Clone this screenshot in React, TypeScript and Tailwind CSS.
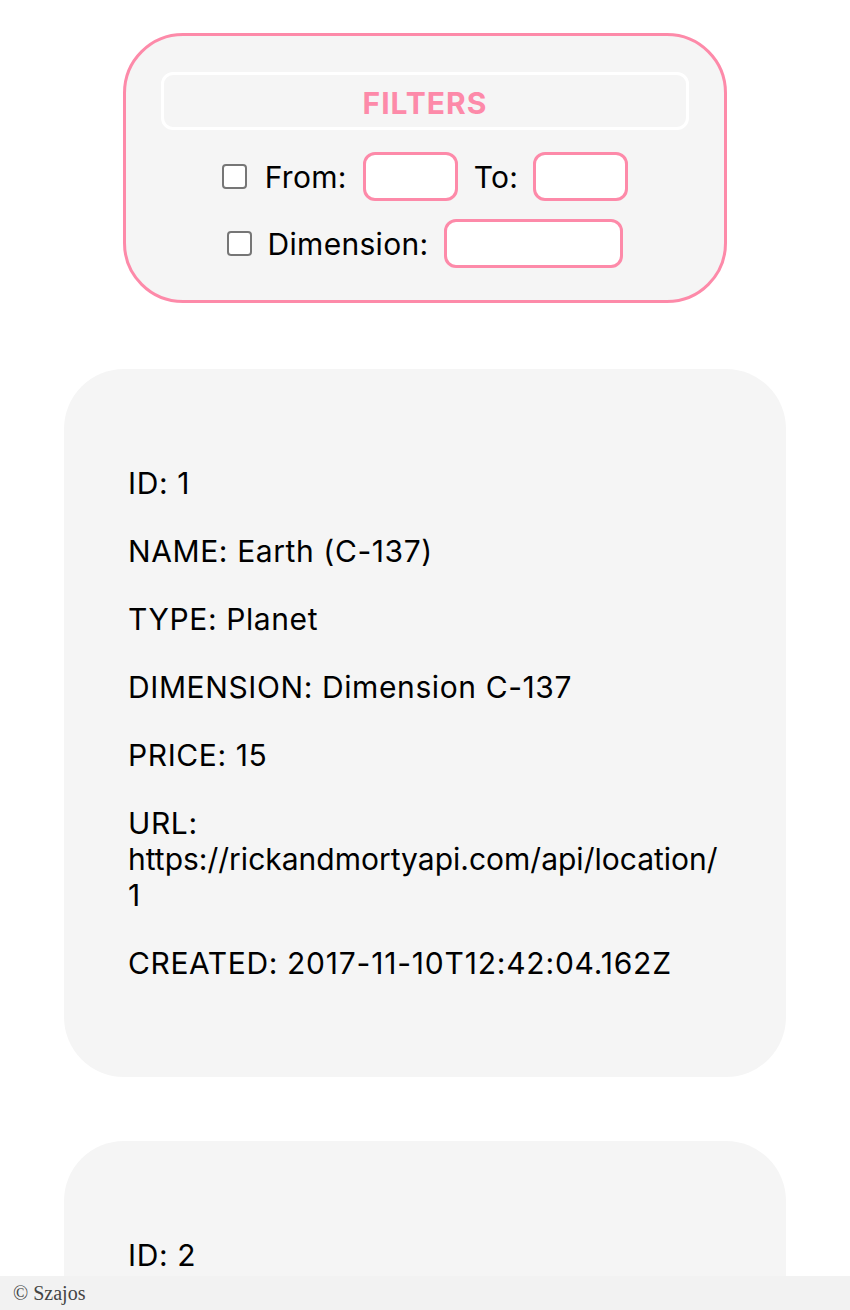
import React from 'react';

type Location = {
  id: number;
  name: string;
  type: string;
  dimension: string;
  price: number;
  url: string;
  created: string;
};

const LOCATIONS: Location[] = [
  {
    id: 1,
    name: 'Earth (C-137)',
    type: 'Planet',
    dimension: 'Dimension C-137',
    price: 15,
    url: 'https://rickandmortyapi.com/api/location/1',
    created: '2017-11-10T12:42:04.162Z',
  },
  {
    id: 2,
    name: 'Abadango',
    type: 'Cluster',
    dimension: 'unknown',
    price: 20,
    url: 'https://rickandmortyapi.com/api/location/2',
    created: '2017-11-10T13:06:38.182Z',
  },
];

function Checkbox() {
  return <span className="block w-[25px] h-[25px] rounded-[4px] border-2 border-[#767676] bg-white" />;
}

function Filters() {
  return (
    <div className="mx-auto w-[604px] rounded-[60px] border-[3px] border-[#fd8aa9] bg-[#f5f5f5] px-[35px] pt-[36px] pb-[32px] tracking-[0.3px]">
      <div className="h-[58px] rounded-[12px] border-[3px] border-white flex items-center justify-center pt-[3px]">
        <span className="text-[30px] font-bold text-[#fd8aa9] tracking-[1px]">FILTERS</span>
      </div>
      <div className="mt-[22px] flex items-center justify-center">
        <Checkbox />
        <span className="ml-[18px]">From:</span>
        <span className="ml-4 w-[95px] h-[49px] rounded-[12px] border-[3px] border-[#fd8aa9] bg-white" />
        <span className="ml-4">To:</span>
        <span className="ml-[15px] w-[95px] h-[49px] rounded-[12px] border-[3px] border-[#fd8aa9] bg-white" />
      </div>
      <div className="mt-[18px] flex items-center justify-center">
        <Checkbox />
        <span className="ml-4">Dimension:</span>
        <span className="ml-4 w-[179px] h-[49px] rounded-[12px] border-[3px] border-[#fd8aa9] bg-white" />
      </div>
    </div>
  );
}

function LocationCard({ loc }: { loc: Location }) {
  // break the url after its last slash, as the design shows
  const slash = loc.url.lastIndexOf('/') + 1;
  return (
    <div className="mx-16 rounded-[60px] bg-[#f5f5f5] px-16 py-24 flex flex-col gap-8">
      <p>ID: {loc.id}</p>
      <p>NAME: {loc.name}</p>
      <p>TYPE: {loc.type}</p>
      <p>DIMENSION: {loc.dimension}</p>
      <p>PRICE: {loc.price}</p>
      <p>
        URL: <span className="tracking-normal">{loc.url.slice(0, slash)}<wbr />{loc.url.slice(slash)}</span>
      </p>
      <p>CREATED: <span className="tracking-[0.8px]">{loc.created}</span></p>
    </div>
  );
}

export default function App() {
  return (
    <div className="min-h-[1310px] bg-white text-black text-[30px] leading-[36px] tracking-[0.6px] font-['Inter',sans-serif]">
      <div className="pt-[33px]">
        <Filters />
      </div>
      <div className="mt-[66px] flex flex-col gap-16 pb-16">
        {LOCATIONS.map((loc) => (
          <LocationCard key={loc.id} loc={loc} />
        ))}
      </div>
      <footer className="fixed bottom-0 left-0 right-0 h-[34px] bg-[#f2f2f2] flex items-center px-[13px] text-[20px] tracking-normal text-[#444] font-['Liberation_Serif',serif]">
        © Szajos
      </footer>
    </div>
  );
}
